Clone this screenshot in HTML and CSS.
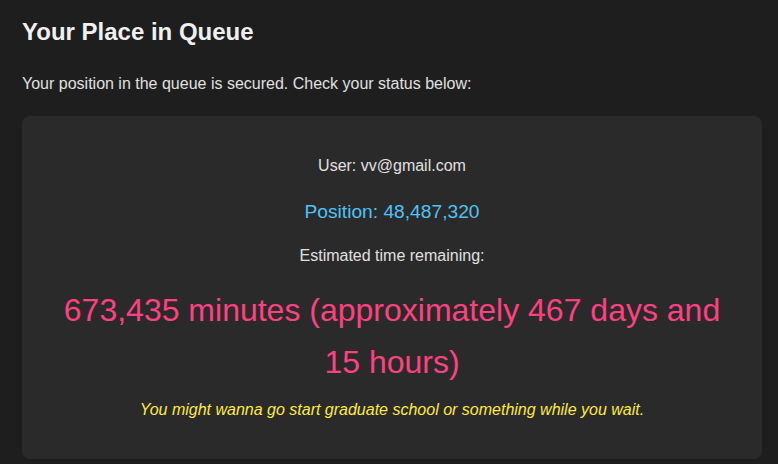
FILE: index.html
```html
<!DOCTYPE html>
<html lang="en">
<head>
<meta charset="utf-8">
<title>Your Place in Queue</title>
<link rel="stylesheet" href="styles.css">
</head>
<body>
<main class="page">
  <h1 class="title">Your Place in Queue</h1>
  <p class="intro">Your position in the queue is secured. Check your status below:</p>
  <section class="card">
    <p class="user">User: vv@gmail.com</p>
    <p class="position">Position: 48,487,320</p>
    <p class="eta-label">Estimated time remaining:</p>
    <p class="eta">673,435 minutes (approximately 467 days and 15 hours)</p>
    <p class="quip">You might wanna go start graduate school or something while you wait.</p>
  </section>
</main>
</body>
</html>
```
FILE: styles.css
```css
html, body {
  margin: 0;
  padding: 0;
  background: #1e1e1e;
}
body {
  font-family: "Liberation Sans", Arial, sans-serif;
  color: #e0e0e0;
}
.page {
  padding: 18px 16px 0 22px;
}
.title {
  margin: 0;
  font-size: 24px;
  line-height: 28px;
  font-weight: bold;
  color: #f0f0f0;
}
.intro {
  margin: 29px 0 0;
  font-size: 16px;
  line-height: 18px;
}
.card {
  margin-top: 23px;
  background: #2a2a2a;
  border-radius: 8px;
  padding: 41px 40px 40px;
  text-align: center;
}
.card p {
  margin: 0;
}
.user {
  font-size: 16px;
  line-height: 18px;
}
.card .position {
  margin-top: 26px;
  font-size: 19.2px;
  line-height: 22px;
  color: #4fc3f7;
}
.card .eta-label {
  margin-top: 24px;
  font-size: 16px;
  line-height: 18px;
}
.card .eta {
  margin-top: 19px;
  font-size: 32px;
  line-height: 52px;
  color: #ff4081;
}
.card .quip {
  margin-top: 13px;
  font-size: 16px;
  line-height: 18px;
  font-style: italic;
  color: #ffeb3b;
}
```
